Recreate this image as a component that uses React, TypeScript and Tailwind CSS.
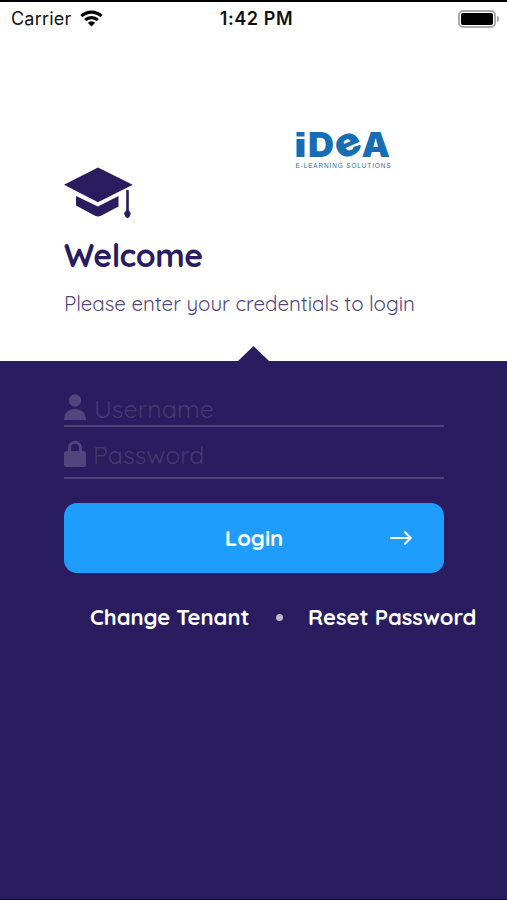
import React from "react";

const rounded = "font-['Quicksand','Inter',sans-serif]";

function StatusBar() {
  return (
    <header className="grid h-9 grid-cols-3 items-center border-t-2 border-black pl-[11px] pr-[8px] font-['Inter','Liberation_Sans',sans-serif] text-[#111]">
      <div className="flex items-center gap-[9px]">
        <span className="text-[18px] leading-none tracking-[0.2px]">Carrier</span>
        <svg className="h-[17px] w-[23px] -translate-y-[1px]" viewBox="0 0 23 17" fill="none" stroke="#000" strokeWidth="3.2">
          <path d="M1.4 6.2a14.5 14.5 0 0 1 20.2 0" />
          <path d="M5.2 10.2a9 9 0 0 1 12.6 0" />
          <path d="M11.5 16.4 7.8 12.8a5.3 5.3 0 0 1 7.4 0z" fill="#000" stroke="none" />
        </svg>
      </div>
      <span className="ml-[3px] whitespace-nowrap text-center text-[18px] font-semibold leading-none tracking-[0.6px]">1:42 PM</span>
      <div className="flex items-center justify-end gap-[1px]">
        <div className="h-[18px] w-[38px] rounded-[5px] border-2 border-[#aaa] p-[1px]">
          <div className="h-full w-full rounded-[2px] bg-black" />
        </div>
        <div className="h-[6px] w-[2px] rounded-r-full bg-[#aaa]" />
      </div>
    </header>
  );
}

function Logo() {
  return (
    <svg className="ml-[295px] block h-[40px] w-[97px] overflow-visible" viewBox="295 130 97 40" fill="#176db5" fontFamily="Inter, sans-serif">
      <rect x="296.5" y="132" width="8" height="4.5" />
      <rect x="296.5" y="139" width="8" height="18" />
      <g fontWeight="900">
        <text x="308" y="157" fontSize="34" textLength="26" lengthAdjust="spacingAndGlyphs">D</text>
        <text x="335" y="156" fontSize="40" textLength="26" lengthAdjust="spacingAndGlyphs" transform="rotate(-24 348 145)">e</text>
        <text x="361.5" y="157" fontSize="34" textLength="28.5" lengthAdjust="spacingAndGlyphs">A</text>
      </g>
      <text x="295.5" y="167.9" fontSize="6.4" fontFamily="Liberation Sans, sans-serif" textLength="95" lengthAdjust="spacing">E-LEARNING SOLUTIONS</text>
    </svg>
  );
}

function GraduationCap() {
  return (
    <svg className="block h-[52px] w-[70px]" viewBox="0 0 70 52" fill="#291c5f">
      <path d="M34 .6 68.7 17.7 34 35.2 0 17.7z" />
      <path d="M12 29v9.5L31 48.8q3 1.6 6 0l17.5-9.3V29L34 39.6z" />
      <path d="M62.2 23.5q1.3-1.5 2.6 0V43l2 3.5-1.3 3.4q-2 2-4 0L60 46.500l2.2-3.500z" />
    </svg>
  );
}

export default function App() {
  return (
    <div className={`h-[900px] w-[507px] overflow-hidden border-b border-[#0b081d] bg-white ${rounded}`}>
      <StatusBar />
      <section className="flex h-[325px] flex-col pt-[94px]">
        <Logo />
        <div className="-mt-[3px] pl-[64px] text-[#291c5f]">
          <GraduationCap />
          <h1 className="mt-[16px] text-[32px] font-bold leading-[40px] tracking-[-0.45px]">Welcome</h1>
          <p className="mt-[13px] text-[20.5px] font-normal leading-[30px] tracking-[-0.03px] text-[#514681]">Please enter your credentials to login</p>
        </div>
        <svg className="mx-auto mt-auto block h-[15px] w-[32px] shrink-0" viewBox="0 0 32 15" fill="#291c5f">
          <path d="M0 15 15.500 0 31 15z" />
        </svg>
      </section>
      <main className="h-[539px] bg-[#291c5f] pt-[25px] text-white">
        <div className="ml-[64px] w-[380px]">
          <label className="flex h-[41px] items-center gap-[8px] border-b-2 border-[#51457d] pt-[5px] text-[#443870]">
            <svg className="h-[26px] w-[22px] -translate-y-[1px]" viewBox="0 0 22 26" fill="#51457d">
              <circle cx="11" cy="6.5" r="6.2" />
              <path d="M0 26c0-7 4-11 11-11s11 4 11 11z" />
            </svg>
            <span className="text-[25px] font-normal leading-none">Username</span>
          </label>
          <label className="flex h-[52px] items-center gap-[7px] border-b-2 border-[#51457d] pb-[1px] pt-[5px] text-[#443870]">
            <svg className="h-[27px] w-[22px] -translate-y-[1px]" viewBox="0 0 22 27" fill="#51457d">
              <path d="M5.5 12V7.800a5.500 5.500 0 0 1 11 0V12" fill="none" stroke="#51457d" strokeWidth="3" />
              <rect y="11" width="22" height="16" rx="2.5" />
            </svg>
            <span className="text-[25px] font-normal leading-none">Password</span>
          </label>
          <button className="mt-[24px] grid h-[70px] w-full grid-cols-[1fr_auto_1fr] items-center rounded-[13px] bg-[#1e9dff] pr-[32px] text-white">
            <span className="col-start-2 pl-[32px] text-[22px] font-bold">Login</span>
            <svg className="h-[14px] w-[22px] justify-self-end" viewBox="0 0 22 14" fill="none" stroke="white" strokeWidth="2" strokeLinecap="round" strokeLinejoin="round">
              <path d="M1 7h19.500M15 1.300 20.700 7 15 12.700" />
            </svg>
          </button>
        </div>
        <nav className="ml-[90px] mt-[28px] flex h-[32px] items-center whitespace-nowrap text-[22px] font-bold">
          <span className="w-[186px]">Change Tenant</span>
          <i className="h-[7px] w-[7px] rounded-full bg-[#bcb6d0]" />
          <span className="ml-[25px]">Reset Password</span>
        </nav>
      </main>
    </div>
  );
}
